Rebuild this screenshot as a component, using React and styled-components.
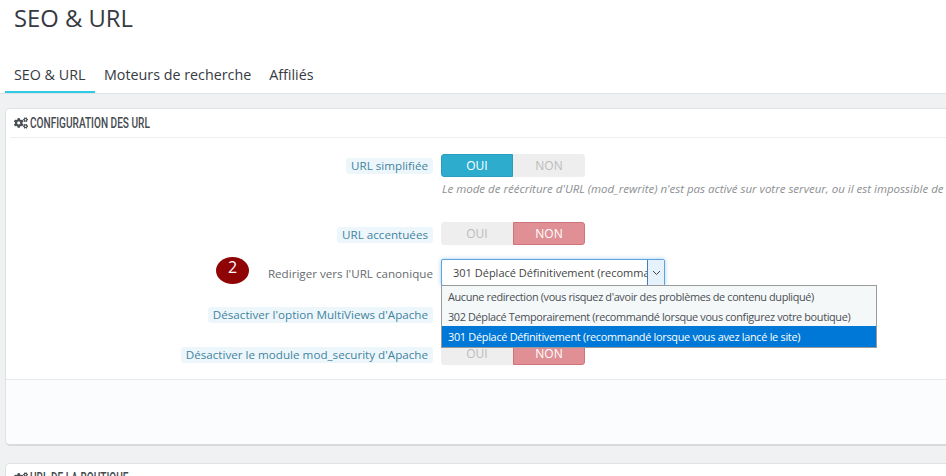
import React from "react";
import styled, { createGlobalStyle } from "styled-components";
import { FaCogs } from "react-icons/fa";

const Global = createGlobalStyle`
  html, body { margin: 0; padding: 0; width: 946px; height: 476px; overflow: hidden; background: #eff1f2; }
  body { font-family: "Open Sans", "Liberation Sans", sans-serif; color: #363a41; }
  * { box-sizing: border-box; }
`;

const Page = styled.div`
  width: 946px;
  height: 476px;
  overflow: hidden;
  position: relative;
`;

const Header = styled.header`
  background: #fff;
  height: 94px;
  border-bottom: 1px solid #dfe2e4;
  display: flex;
  flex-direction: column;
  justify-content: space-between;
`;

const Title = styled.h1`
  margin: 0;
  padding: 3px 0 0 14px;
  font-size: 23.8px;
  line-height: 30px;
  font-weight: 400;
  color: #363a41;
`;

const Tabs = styled.nav`
  display: flex;
  padding-left: 5px;
`;

const Tab = styled.a`
  padding: 0 9px;
  min-width: ${(p) => (p.$active ? "90px" : "0")};
  height: 33px;
  line-height: 29px;
  font-size: 14.3px;
  color: #363a41;
  border-bottom: 2px solid ${(p) => (p.$active ? "#2fcbe6" : "transparent")};
`;

const Content = styled.main`
  padding: 14px 0 0 5px;
  width: 1100px;
  display: flex;
  flex-direction: column;
  gap: 17px;
`;

const Panel = styled.section`
  background: #fff;
  border: 1px solid #dfe2e4;
  border-bottom: 2px solid #d8dbdd;
  border-radius: 5px;
`;

const PanelHeading = styled.div`
  margin: 0 4px;
  height: 29px;
  padding-left: 4px;
  border-bottom: 1px solid #eeeeee;
  display: flex;
  align-items: center;
  gap: 2px;
  color: #44494e;
  svg { width: 14px; height: 14px; color: #4a4f54; flex: none; }
`;

const HeadingText = styled.span`
  font-family: "Roboto", "Liberation Sans", sans-serif;
  font-size: 14px;
  font-weight: 500;
  display: inline-block;
  transform: scaleX(0.72);
  transform-origin: left center;
  white-space: nowrap;
`;

const Form = styled.div`
  height: 241px;
  padding-top: 16px;
  display: flex;
  flex-direction: column;
`;

const Row = styled.div`
  display: grid;
  grid-template-columns: 427px 1fr;
  column-gap: 8px;
  margin-bottom: ${(p) => p.$after}px;
`;

const LabelCell = styled.div`
  display: flex;
  justify-content: flex-end;
  align-items: ${(p) => (p.$top ? "flex-start" : "center")};
  padding-top: ${(p) => (p.$top ? "4px" : "2px")};
`;

const HintLabel = styled.span`
  background: #edf7fb;
  color: #43839f;
  font-size: 11.65px;
  line-height: 16px;
  padding: 0 5px;
  border-radius: 3px;
  white-space: nowrap;
`;

const PlainLabel = styled.span`
  color: #666b70;
  font-size: 11.65px;
  line-height: 16px;
  white-space: nowrap;
`;

const Toggle = styled.div`
  display: flex;
  width: 144px;
  height: 23px;
`;

const ToggleOption = styled.span`
  flex: 1;
  display: flex;
  align-items: center;
  justify-content: center;
  font-size: 12px;
  border-radius: ${(p) => (p.$side === "left" ? "3px 0 0 3px" : "0 3px 3px 0")};
  background: ${(p) => (p.$on === "yes" ? "#2eacce" : p.$on === "no" ? "#e08f95" : "#eeeeee")};
  color: ${(p) => (p.$on ? "#fff" : "#bbbbbb")};
  border: 1px solid ${(p) => (p.$on === "yes" ? "#2a9dbc" : p.$on === "no" ? "#cf747b" : "#eeeeee")};
`;

const Help = styled.p`
  margin: 4px 0 0 1px;
  font-size: 11.5px;
  line-height: 16px;
  font-style: italic;
  color: #8c8f92;
  white-space: nowrap;
`;

const Select = styled.div`
  width: 224px;
  height: 27px;
  display: flex;
  align-items: stretch;
  background: #fff;
  border: 1px solid #5fa3dc;
  border-radius: 2px;
  box-shadow: 0 0 4px rgba(102, 175, 233, 0.6);
`;

const SelectValue = styled.span`
  flex: 1;
  min-width: 0;
  overflow: hidden;
  white-space: nowrap;
  padding-left: 11px;
  font-size: 11px;
  line-height: 25px;
  color: #444;
`;

const SelectArrow = styled.span`
  flex: none;
  width: 17px;
  display: flex;
  align-items: center;
  justify-content: center;
  background: #e5f1fb;
  border-left: 1px solid #3f7fb8;
  svg { width: 9px; height: 6px; }
`;

const Menu = styled.ul`
  position: absolute;
  left: 441px;
  top: 285px;
  width: 436px;
  height: 63px;
  margin: 0;
  padding: 0;
  list-style: none;
  background: #f5f8f9;
  border: 1px solid #9a9a9a;
`;

const MenuItem = styled.li`
  height: ${(p) => (p.$selected ? "21px" : "20px")};
  line-height: 22px;
  padding-left: 6px;
  font-size: 10.9px;
  letter-spacing: ${(p) => (p.$selected ? "-0.29px" : "-0.36px")};
  white-space: nowrap;
  background: ${(p) => (p.$selected ? "#0078d7" : "transparent")};
  color: ${(p) => (p.$selected ? "#fff" : "#4a4f54")};
`;

const StepBadge = styled.span`
  position: absolute;
  left: 216px;
  top: 257px;
  width: 33px;
  height: 27px;
  border-radius: 50%;
  background: #8f0404;
  color: #fff;
  font-size: 16px;
  line-height: 21px;
  text-align: center;
`;

const PanelFooter = styled.div`
  height: 65px;
  background: #fbfcfd;
  border-top: 1px solid #e8eaeb;
  border-radius: 0 0 5px 5px;
`;

const OnOff = ({ on }) => (
  <Toggle>
    <ToggleOption $side="left" $on={on ? "yes" : undefined}>OUI</ToggleOption>
    <ToggleOption $side="right" $on={on ? undefined : "no"}>NON</ToggleOption>
  </Toggle>
);

export default function App() {
  return (
    <Page>
      <Global />
      <Header>
        <Title>SEO &amp; URL</Title>
        <Tabs>
          <Tab $active>SEO &amp; URL</Tab>
          <Tab>Moteurs de recherche</Tab>
          <Tab>Affiliés</Tab>
        </Tabs>
      </Header>
      <Content>
        <Panel>
          <PanelHeading>
            <FaCogs />
            <HeadingText>CONFIGURATION DES URL</HeadingText>
          </PanelHeading>
          <Form>
            <Row $after={25}>
              <LabelCell $top><HintLabel>URL simplifiée</HintLabel></LabelCell>
              <div>
                <OnOff on />
                <Help>Le mode de réécriture d'URL (mod_rewrite) n'est pas activé sur votre serveur, ou il est impossible de vérifier son statut. Si vous souhaitez utiliser les URL simplifiées, vous devez activer ce mode.</Help>
              </div>
            </Row>
            <Row $after={14}>
              <LabelCell><HintLabel>URL accentuées</HintLabel></LabelCell>
              <OnOff />
            </Row>
            <Row $after={16}>
              <LabelCell><PlainLabel>Rediriger vers l'URL canonique</PlainLabel></LabelCell>
              <Select>
                <SelectValue>301 Déplacé Définitivement (recommandé lorsque vous avez lancé le site)</SelectValue>
                <SelectArrow>
                  <svg viewBox="0 0 9 6" fill="none" stroke="#444" strokeWidth="1"><path d="M1 1l3.5 3.5L8 1" /></svg>
                </SelectArrow>
              </Select>
            </Row>
            <Row $after={17}>
              <LabelCell><HintLabel>Désactiver l'option MultiViews d'Apache</HintLabel></LabelCell>
              <OnOff />
            </Row>
            <Row $after={0}>
              <LabelCell><HintLabel>Désactiver le module mod_security d'Apache</HintLabel></LabelCell>
              <OnOff />
            </Row>
          </Form>
          <PanelFooter />
        </Panel>
        <Panel>
          <PanelHeading>
            <FaCogs />
            <HeadingText>URL DE LA BOUTIQUE</HeadingText>
          </PanelHeading>
        </Panel>
      </Content>
      <StepBadge>2</StepBadge>
      <Menu>
        <MenuItem>Aucune redirection (vous risquez d'avoir des problèmes de contenu dupliqué)</MenuItem>
        <MenuItem>302 Déplacé Temporairement (recommandé lorsque vous configurez votre boutique)</MenuItem>
        <MenuItem $selected>301 Déplacé Définitivement (recommandé lorsque vous avez lancé le site)</MenuItem>
      </Menu>
    </Page>
  );
}
